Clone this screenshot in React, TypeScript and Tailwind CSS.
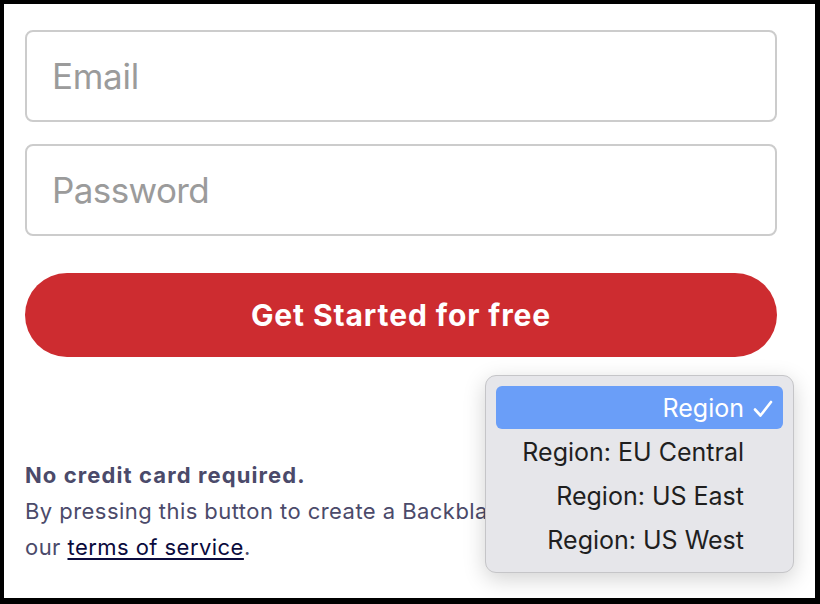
import React from "react";

export default function App() {
  const items = [
    { label: "Region", selected: true },
    { label: "Region: EU Central", selected: false },
    { label: "Region: US East", selected: false },
    { label: "Region: US West", selected: false },
  ];
  return (
    <div className="w-[820px] h-[604px] bg-black pt-[4px] pl-[4px] pr-[5px] pb-[6px]">
      <div className="relative w-full h-full bg-white overflow-hidden" style={{ fontFamily: "Inter, 'Noto Sans', sans-serif" }}>
        <div className="flex flex-col pl-[21px] pt-[26px] w-[773px]">
          <div className="h-[92px] border-2 border-[#cccccc] rounded-[8px] flex items-center pl-[25px] text-[35px] text-[#9b9b9b] tracking-[-0.3px]">
            Email
          </div>
          <div className="mt-[22px] h-[92px] border-2 border-[#cccccc] rounded-[8px] flex items-center pl-[25px] text-[35px] text-[#9b9b9b] tracking-[-0.6px]">
            Password
          </div>
          <div className="mt-[37px] h-[84px] rounded-full bg-[#cd2c30] flex items-center justify-center text-white text-[30px] font-bold tracking-[0.9px]">
            Get Started for free
          </div>
          <div className="mt-[100px] text-[22px] leading-[36px] text-[#4b4a6a] whitespace-nowrap">
            <div className="font-bold tracking-[1.1px]">No credit card required.</div>
            <div className="tracking-[0.45px] w-[460px] overflow-hidden">By pressing this button to create a Backblaze account, you agree to</div>
            <div className="tracking-[0.45px]">
              our <span className="underline text-[#0a0a3c] underline-offset-[3px]">terms of service</span>.
            </div>
          </div>
        </div>

        <div
          className="absolute left-[481px] top-[371px] w-[309px] h-[198px] rounded-[11px] bg-[#e6e6ea] border border-[#c5c5c8] shadow-[0_6px_22px_rgba(0,0,0,0.18)] pt-[10px] px-[10px] flex flex-col"
          style={{ fontFamily: "Inter, 'Noto Sans', sans-serif" }}
        >
          {items.map((it) => (
            <div
              key={it.label}
              className={
                it.selected
                  ? "h-[43px] rounded-[6px] bg-[#6a9ef8] text-white flex items-center justify-end text-[25px] pt-[2px]"
                  : "h-[44px] text-[#1f1f1f] flex items-center justify-end text-[25px] pt-[3px]"
              }
            >
              <span>{it.label}</span>
              <span className="w-[39px] flex items-center justify-start pl-[9px]">
                {it.selected ? (
                  <svg width="20" height="18" viewBox="0 0 20 18" fill="none">
                    <path d="M2 9.5 L7.5 15.5 L18 2" stroke="white" strokeWidth="2.6" strokeLinecap="round" strokeLinejoin="round" />
                  </svg>
                ) : null}
              </span>
            </div>
          ))}
        </div>
      </div>
    </div>
  );
}
